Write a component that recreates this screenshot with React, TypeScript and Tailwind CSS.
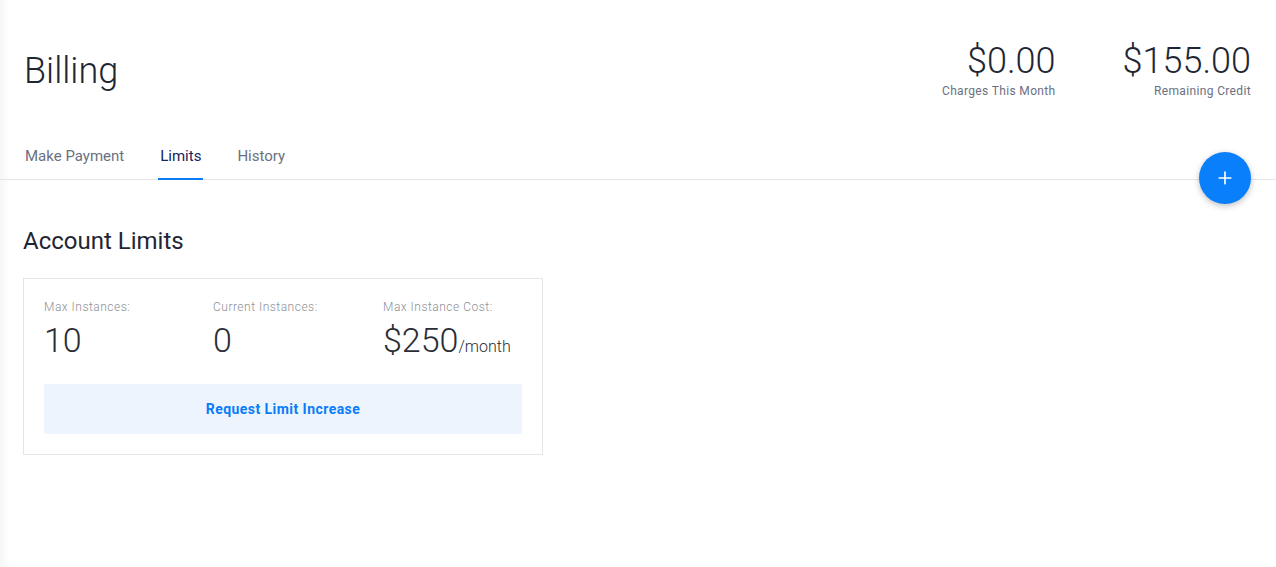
import { Plus } from 'lucide-react';

const tabs = ['Make Payment', 'Limits', 'History'];

const limits = [
  { label: 'Max Instances:', value: '10' },
  { label: 'Current Instances:', value: '0' },
  { label: 'Max Instance Cost:', value: '$250', suffix: '/month' },
];

export default function App() {
  return (
    <div className="flex min-h-[567px] bg-white text-[#1f2633]" style={{ fontFamily: 'Roboto, "Noto Sans", sans-serif' }}>
      {/* sidebar shadow edge */}
      <div className="w-[10px] shrink-0 bg-gradient-to-r from-[#f6f6f6] to-white" />

      <div className="relative flex-1 -ml-[10px]">
        {/* Header */}
        <div className="flex items-start justify-between pl-6 pr-[25px] pt-[41px]">
          <h1 className="mt-[8px] text-[36px] font-light leading-[44px]">Billing</h1>
          <div className="flex gap-[67px]">
            <div className="flex flex-col items-end">
              <span className="text-[36px] font-light leading-[40px]">$0.00</span>
              <span className="mt-[1px] text-[12px] tracking-[0.35px] text-[#6b7080]">Charges This Month</span>
            </div>
            <div className="flex flex-col items-end">
              <span className="text-[36px] font-light leading-[40px]">$155.00</span>
              <span className="mt-[1px] text-[12px] tracking-[0.35px] text-[#6b7080]">Remaining Credit</span>
            </div>
          </div>
        </div>

        {/* Tabs */}
        <div className="mt-[35px] flex gap-[34px] border-b border-[#e6e6e8] pl-[24px]">
          {tabs.map((t) => (
            <button
              key={t}
              className={`relative h-[44px] px-[1px] pb-[2px] text-[15px] ${
                t === 'Limits' ? 'text-[#17215c]' : 'text-[#6b7080]'
              }`}
            >
              {t}
              {t === 'Limits' && (
                <span className="absolute -bottom-[1px] -left-[1px] -right-[1px] h-[2px] bg-[#0a7cf8]" />
              )}
            </button>
          ))}
        </div>

        <button className="absolute right-[25px] top-[152px] flex h-[52px] w-[52px] items-center justify-center rounded-full bg-[#0a7ffb] text-white shadow-[0_2px_6px_rgba(0,0,0,0.25)]">
          <Plus className="h-[20px] w-[20px]" strokeWidth={2} />
        </button>

        {/* Account limits */}
        <div className="pl-[23px] pt-[47px]">
          <h2 className="text-[24px] leading-[28px]">Account Limits</h2>
          <div className="mt-[23px] w-[520px] border border-[#e5e5e7] px-[20px] pb-[20px] pt-[19px]">
            <div className="grid grid-cols-[169px_170px_1fr]">
              {limits.map((l) => (
                <div key={l.label} className="flex flex-col">
                  <span className="text-[12px] font-light tracking-[0.5px] text-[#8d8f96]">{l.label}</span>
                  <span className="mt-[4px] text-[34px] font-light leading-[40px] text-[#2a2d35]">
                    {l.value}
                    {l.suffix && <span className="text-[16px]">{l.suffix}</span>}
                  </span>
                </div>
              ))}
            </div>
            <button className="mt-[17px] h-[50px] w-full rounded-[2px] bg-[#edf4fe] text-[14px] font-bold tracking-[0.45px] text-[#0a7cf8]">
              Request Limit Increase
            </button>
          </div>
        </div>
      </div>
    </div>
  );
}
